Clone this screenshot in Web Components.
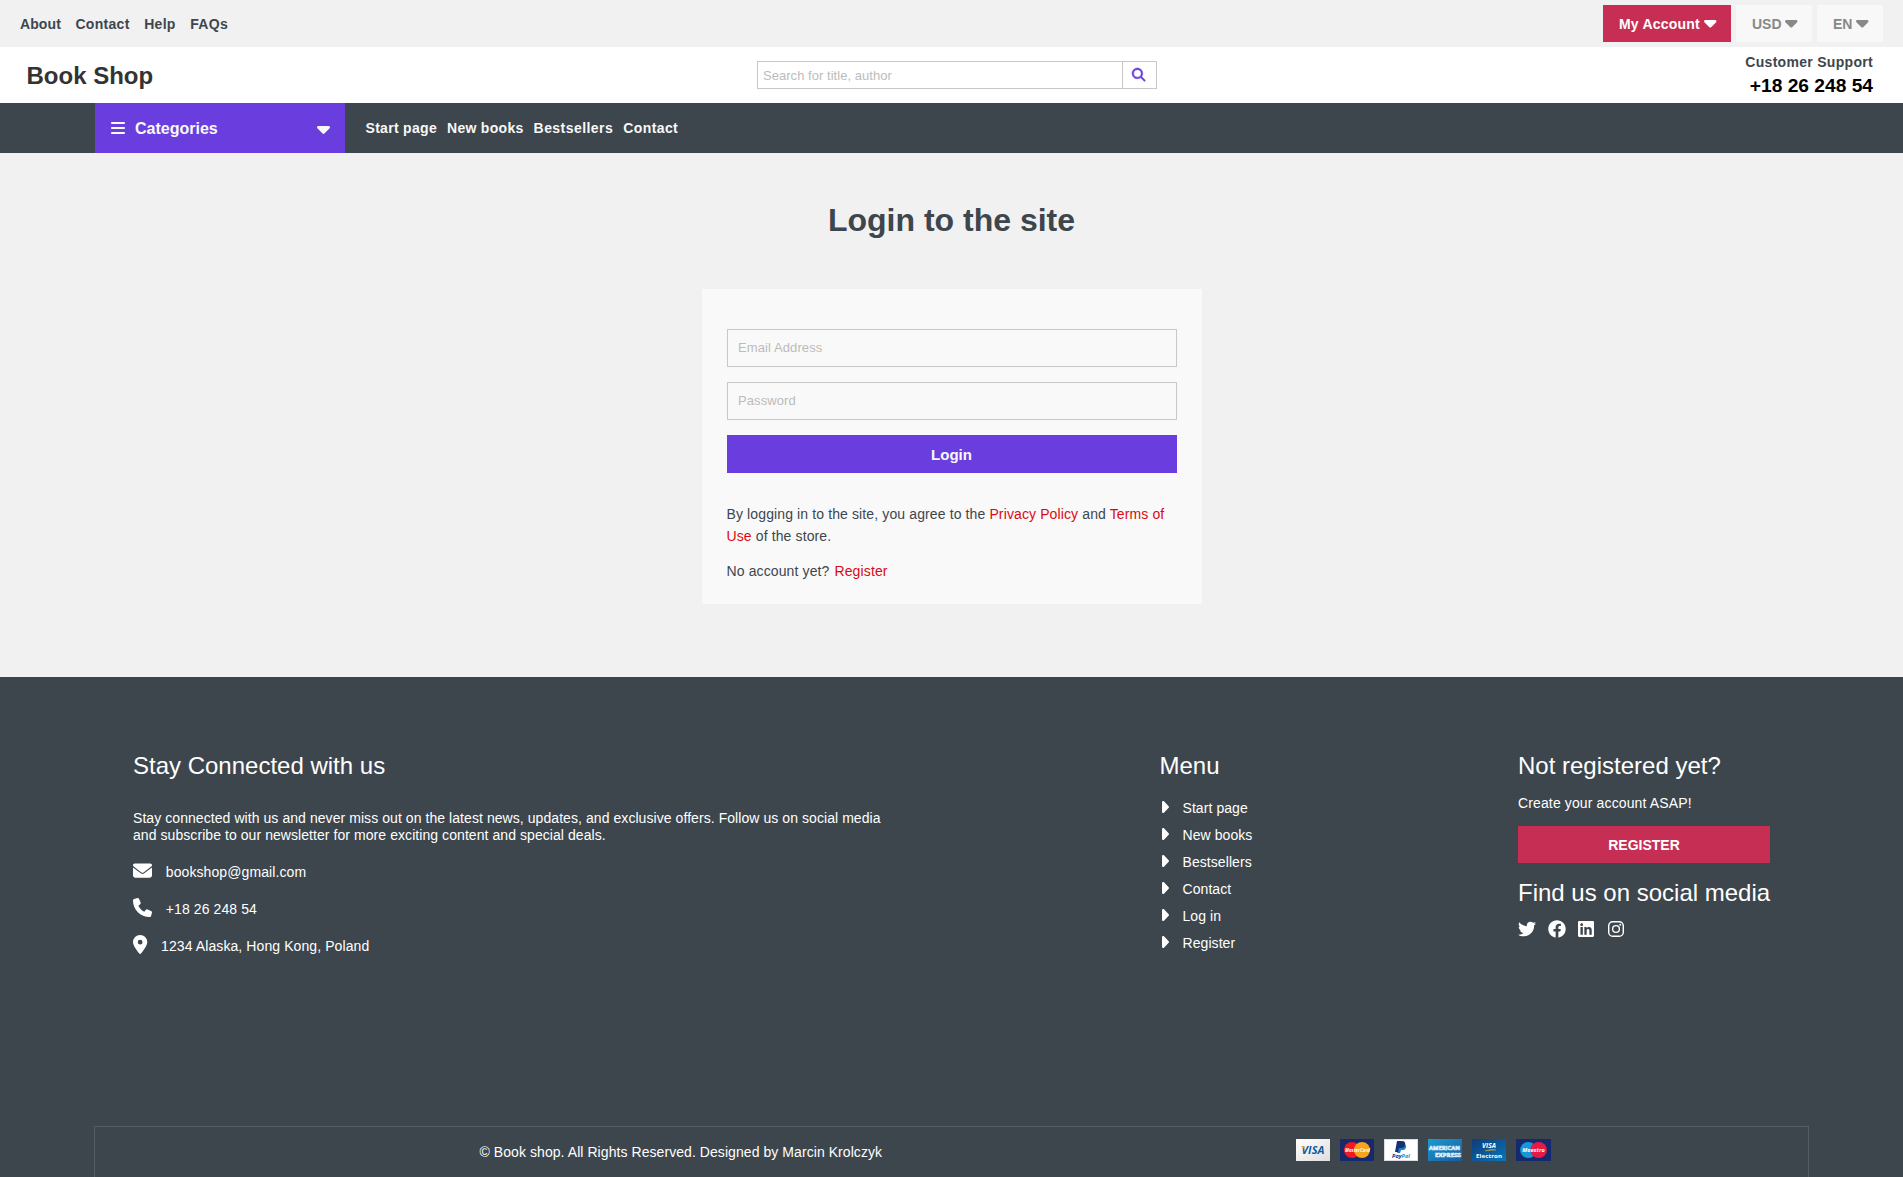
<!DOCTYPE html>
<html lang="en">
<head>
<meta charset="utf-8">
<title>Book Shop</title>
<style>
html,body{margin:0;padding:0}
body{background:#f1f1f1;font-family:"Liberation Sans",Arial,sans-serif;font-size:14px;color:#3d464d;line-height:16px;height:1177px;overflow:hidden}
</style>
</head>
<body>
<book-app></book-app>
<script>
const ICONS={
down:['0 192 320 192','M137.4 374.6c12.5 12.5 32.8 12.5 45.3 0l128-128c9.2-9.2 11.9-22.9 6.9-34.9s-16.6-19.8-29.6-19.8L32 192c-12.9 0-24.6 7.8-29.6 19.8s-2.2 25.7 6.9 34.9l128 128z'],
right:['64 96 192 320','M246.6 278.6c12.5-12.5 12.5-32.8 0-45.3l-128-128c-9.2-9.2-22.9-11.9-34.9-6.9s-19.8 16.6-19.8 29.6l0 256c0 12.9 7.8 24.6 19.8 29.6s25.7 2.2 34.9-6.9l128-128z'],
search:['0 0 512 512','M416 208c0 45.9-14.9 88.3-40 122.7L502.6 457.4c12.5 12.5 12.5 32.8 0 45.3s-32.8 12.5-45.3 0L330.7 376c-34.4 25.2-76.8 40-122.7 40C93.1 416 0 322.9 0 208S93.1 0 208 0S416 93.1 416 208zM208 352a144 144 0 1 0 0-288 144 144 0 1 0 0 288z'],
bars:['0 64 448 384','M0 96C0 78.3 14.3 64 32 64H416c17.7 0 32 14.3 32 32s-14.3 32-32 32H32C14.3 128 0 113.7 0 96zM0 256c0-17.7 14.3-32 32-32H416c17.7 0 32 14.3 32 32s-14.3 32-32 32H32c-17.7 0-32-14.3-32-32zM448 416c0 17.7-14.3 32-32 32H32c-17.7 0-32-14.3-32-32s14.3-32 32-32H416c17.7 0 32 14.3 32 32z'],
mail:['0 0 512 512','M48 64C21.5 64 0 85.5 0 112c0 15.1 7.1 29.3 19.2 38.4L236.8 313.6c11.4 8.5 27 8.5 38.4 0L492.8 150.4c12.1-9.1 19.2-23.3 19.2-38.4c0-26.5-21.5-48-48-48H48zM0 176V384c0 35.3 28.7 64 64 64H448c35.3 0 64-28.7 64-64V176L294.4 339.2c-22.8 17.1-54 17.1-76.8 0L0 176z'],
phone:['0 0 512 512','M164.9 24.6c-7.7-18.6-28-28.5-47.4-23.2l-88 24C12.1 30.2 0 46 0 64C0 311.4 200.6 512 448 512c18 0 33.8-12.1 38.6-29.5l24-88c5.3-19.4-4.6-39.7-23.2-47.4l-96-40c-16.3-6.8-35.2-2.1-46.3 11.6L304.7 368C234.3 334.7 177.3 277.7 144 207.3L193.3 167c13.7-11.2 18.4-30 11.6-46.3l-40-96z'],
pin:['0 0 384 512','M215.7 499.2C267 435 384 279.4 384 192C384 86 298 0 192 0S0 86 0 192c0 87.4 117 243 168.3 307.2c12.3 15.3 35.1 15.3 47.4 0zM192 128a64 64 0 1 1 0 128 64 64 0 1 1 0-128z'],
twitter:['0 0 512 512','M459.37 151.716c.325 4.548.325 9.097.325 13.645 0 138.72-105.583 298.558-298.558 298.558-59.452 0-114.68-17.219-161.137-47.106 8.447.974 16.568 1.299 25.34 1.299 49.055 0 94.213-16.568 130.274-44.832-46.132-.975-84.792-31.188-98.112-72.772 6.498.974 12.995 1.624 19.818 1.624 9.421 0 18.843-1.3 27.614-3.573-48.081-9.747-84.143-51.98-84.143-102.985v-1.299c13.969 7.797 30.214 12.67 47.431 13.319-28.264-18.843-46.781-51.005-46.781-87.391 0-19.492 5.197-37.36 14.294-52.954 51.655 63.675 129.3 105.258 216.365 109.807-1.624-7.797-2.599-15.918-2.599-24.04 0-57.828 46.782-104.934 104.934-104.934 30.213 0 57.502 12.67 76.67 33.137 23.715-4.548 46.456-13.32 66.599-25.34-7.798 24.366-24.366 44.833-46.132 57.827 21.117-2.273 41.584-8.122 60.426-16.243-14.292 20.791-32.161 39.308-52.628 54.253z'],
facebook:['0 0 512 512','M504 256C504 119 393 8 256 8S8 119 8 256c0 123.78 90.69 226.38 209.25 245V327.69h-63V256h63v-54.64c0-62.15 37-96.48 93.67-96.48 27.14 0 55.52 4.84 55.52 4.84v61h-31.28c-30.8 0-40.41 19.12-40.41 38.73V256h68.78l-11 71.69h-57.78V501C413.31 479.77 504 379.78 504 256z'],
linkedin:['0 32 448 448','M416 32H31.9C14.3 32 0 46.5 0 64.3v383.4C0 465.5 14.3 480 31.9 480H416c17.6 0 32-14.5 32-32.3V64.3c0-17.8-14.4-32.3-32-32.3zM135.4 416H69V202.2h66.5V416zm-33.2-243c-21.3 0-38.5-17.3-38.5-38.5S80.9 96 102.2 96c21.2 0 38.5 17.3 38.5 38.5 0 21.3-17.2 38.5-38.5 38.5zm282.1 243h-66.4V312c0-24.8-.5-56.7-34.5-56.7-34.6 0-39.9 27-39.9 54.9V416h-66.4V202.2h63.7v29.2h.9c8.9-16.8 30.6-34.5 62.9-34.5 67.2 0 79.7 44.3 79.7 101.9V416z'],
instagram:['0 32 448 448','M132 32H316A132 132 0 0 1 448 164V348A132 132 0 0 1 316 480H132A132 132 0 0 1 0 348V164A132 132 0 0 1 132 32ZM136 72A96 96 0 0 0 40 168V344A96 96 0 0 0 136 440H312A96 96 0 0 0 408 344V168A96 96 0 0 0 312 72ZM224 141A115 115 0 1 1 224 371A115 115 0 1 1 224 141ZM224 181A75 75 0 1 0 224 331A75 75 0 1 0 224 181ZM343.500 109.500A27 27 0 1 1 343.500 163.500A27 27 0 1 1 343.500 109.500Z']
};
function define(name,html){
  const t=document.createElement('template');t.innerHTML=html;
  customElements.define(name,class extends HTMLElement{
    constructor(){super();this.attachShadow({mode:'open'}).appendChild(t.content.cloneNode(true));}
  });
}
customElements.define('fa-icon',class extends HTMLElement{
  connectedCallback(){
    if(this.shadowRoot)return;
    const [vb,d]=ICONS[this.getAttribute('name')],w=this.getAttribute('w'),h=this.getAttribute('h'),s=this.getAttribute('stroke')||0;
    this.attachShadow({mode:'open'}).innerHTML=`<style>:host{display:block;flex:none;width:${w}px;height:${h}px}svg{display:block;overflow:visible}</style><svg width="${w}" height="${h}" viewBox="${vb}" preserveAspectRatio="none" fill="currentColor" stroke="currentColor" stroke-width="${s}"><path d="${d}"/></svg>`;
  }
});
define('top-bar',`<style>
:host{display:flex;justify-content:space-between;align-items:center;height:47px;padding:0 20px;background:#f1f1f1;font-weight:700;box-sizing:border-box}
nav,div{display:flex}nav{gap:14.5px;padding-top:1px;letter-spacing:.3px}nav a:first-child{letter-spacing:.1px}div{gap:5px}
span{display:flex;align-items:center;justify-content:space-between;height:37px;box-sizing:border-box;padding:1px 15px 0 16px;background:#f8f8f8;color:#888}
.a{width:128px;background:#c62e54;color:#fff;letter-spacing:.2px}.u{width:76px}.e{width:66px}
</style><nav><a>About</a><a>Contact</a><a>Help</a><a>FAQs</a></nav>
<div><span class="a">My Account<fa-icon name="down" w="12.5" h="7.5"></fa-icon></span><span class="u">USD<fa-icon name="down" w="12.500" h="7.5"></fa-icon></span><span class="e">EN<fa-icon name="down" w="12.5" h="7.5"></fa-icon></span></div>`);
define('search-box',`<style>
:host{display:flex;width:400px;height:28px;box-sizing:border-box;border:1px solid #c8c8c8;font-size:13px}
p{margin:0;flex:1;padding:6px 5px 0 5.5px;color:#bcbcbc;line-height:15px;letter-spacing:.04px}
b{width:34px;border-left:1px solid #c8c8c8;color:#6a3ede;display:flex;justify-content:center;align-items:center;box-sizing:border-box}
</style><p>Search for title, author</p><b><fa-icon name="search" w="13.3" h="13.3" stroke="18"></fa-icon></b>`);
define('shop-header',`<style>
:host{display:grid;grid-template-columns:1fr 400px 1fr;align-items:center;height:56px;background:#fff;padding:0 30px 0 26px;box-sizing:border-box}
h1{margin:0;font-size:24px;line-height:28px;color:#333;padding:2px 0 0 .5px}
search-box{position:relative;left:7px}
div{text-align:right;font-weight:700;letter-spacing:.3px}
strong{display:block;font-size:19.2px;line-height:20px;color:#000;margin-top:6px;letter-spacing:0}
</style><h1>Book Shop</h1><search-box></search-box><div>Customer Support<strong>+18 26 248 54</strong></div>`);
define('main-nav',`<style>
:host{display:flex;align-items:center;height:50px;background:#3d464d;padding-left:95px;color:#f8f8f8;font-weight:700}
.c{display:flex;align-items:center;width:250px;height:50px;background:#6a3ede;box-sizing:border-box;padding:0 15px 0 16px;font-size:16px}
.c span{flex:1;padding:1px 0 0 10px}.c fa-icon+span+fa-icon{margin-top:3px}
nav{display:flex;gap:10px;padding-left:20.5px;letter-spacing:.3px}
nav a:nth-child(3){letter-spacing:.45px}nav a:nth-child(4){letter-spacing:.4px}
</style><div class="c"><fa-icon name="bars" w="14" h="12"></fa-icon><span>Categories</span><fa-icon name="down" w="13" h="8"></fa-icon></div>
<nav><a>Start page</a><a>New books</a><a>Bestsellers</a><a>Contact</a></nav>`);
define('text-field',`<style>
:host{display:block;height:38px;border:1px solid #c8c8c8;box-sizing:border-box;padding:10px 10px 10px 10.5px;font-size:13px;color:#bcbcbc;line-height:16px;margin-bottom:15px;letter-spacing:.1px}
</style><slot></slot>`);
define('login-card',`<style>
:host{display:block;width:500px;height:315px;box-sizing:border-box;padding:40px 25px 0;background:#f9f9f9;margin:0 auto;line-height:22px;letter-spacing:.12px}
button{display:block;width:100%;height:38px;border:0;padding:1px 0 0;background:#6a3ede;color:#f8f8f8;font:700 15px "Liberation Sans",sans-serif}
p{margin:30px 0 0}p+p{margin-top:13px}a{color:#d90a12}
</style><text-field>Email Address</text-field><text-field>Password</text-field><button>Login</button>
<p>By logging in to the site, you agree to the <a>Privacy Policy</a> and <a>Terms of Use</a> of the store.</p><p>No account yet?<a style="margin-left:5px">Register</a></p>`);
define('login-page',`<style>
:host{display:block;height:524px;box-sizing:border-box;padding-top:49px}
h2{margin:0 0 51px;font-size:32px;line-height:36px;text-align:center}
</style><h2>Login to the site</h2><login-card></login-card>`);
define('contact-line',`<style>
:host{display:flex;align-items:center;height:19px;margin-bottom:18px;letter-spacing:.09px}span{padding:2px 0 0 14.300px}
</style><slot name="icon"></slot><span><slot></slot></span>`);
define('menu-item',`<style>
:host{display:flex;height:16px;margin-bottom:11px;letter-spacing:.07px}fa-icon{margin:1px 14px 0 2px}
</style><fa-icon name="right" w="7" h="12"></fa-icon><slot></slot>`);
define('pay-cards',`<style>:host{display:flex;gap:10px}svg{display:block;width:34px;height:22px}text{font-family:"Open Sans",sans-serif;font-weight:700}</style>
<svg viewBox="0 0 34 22"><defs><linearGradient id="g" x2="1" y2="1"><stop stop-color="#fff"/><stop offset="1" stop-color="#dedede"/></linearGradient></defs><rect width="34" height="22" fill="url(#g)"/><text x="5.500" y="15" font-size="10.500" font-style="italic" fill="#145a9c" textLength="23" lengthAdjust="spacingAndGlyphs">VISA</text><path d="M5 7.300h3l1.200 3.300z" fill="#f0a030"/></svg>
<svg viewBox="0 0 34 22"><rect width="34" height="22" fill="#16296b"/><circle cx="12" cy="11" r="8" fill="#f01822"/><circle cx="22" cy="11" r="8" fill="#f8a51b"/><text x="5" y="13" font-size="4.600" font-style="italic" fill="#fff" textLength="25" lengthAdjust="spacingAndGlyphs">MasterCard</text></svg>
<svg viewBox="0 0 34 22"><rect x=".5" y=".5" width="33" height="21" fill="#fff" stroke="#ddd"/><path d="M15 5h5c3 0 3 6-1 6h-2l-1 3h-3z" fill="#1b7fc4"/><path d="M13 2h5c5 0 4 7-1 7h-2l-1 4h-3z" fill="#173073"/><text x="8" y="19" font-size="6" font-style="italic" fill="#173073" textLength="18" lengthAdjust="spacingAndGlyphs">Pay<tspan fill="#1b8fd0">Pal</tspan></text></svg>
<svg viewBox="0 0 34 22"><defs><linearGradient id="a" x2="1" y2="1"><stop stop-color="#1d9ad0"/><stop offset="1" stop-color="#155c9f"/></linearGradient></defs><rect width="34" height="22" fill="url(#a)"/><g fill="#1977b5" stroke="#dceefa" stroke-width=".7" font-size="5.500"><text x="1" y="10.500" textLength="31" lengthAdjust="spacingAndGlyphs">AMERICAN</text><text x="7" y="17.500" textLength="26" lengthAdjust="spacingAndGlyphs">EXPRESS</text></g></svg>
<svg viewBox="0 0 34 22"><defs><linearGradient id="v" x2="1" y2="1"><stop stop-color="#103b78"/><stop offset="1" stop-color="#0876b7"/></linearGradient></defs><rect width="34" height="22" fill="url(#v)"/><text x="10" y="9" font-size="6.500" font-style="italic" fill="#fff" textLength="14" lengthAdjust="spacingAndGlyphs">VISA</text><path d="M13 11.800q7-2 11-.8-6-.2-11 .8" fill="#f3a92c" stroke="#f3a92c" stroke-width=".4"/><text x="4" y="18.500" font-size="5.800" fill="#fff" textLength="26" lengthAdjust="spacingAndGlyphs">Electron</text></svg>
<svg viewBox="0 0 34 22" preserveAspectRatio="none" style="width:35px"><rect width="34" height="22" fill="#15296d"/><circle cx="12" cy="11" r="8" fill="#1697d8"/><circle cx="22" cy="11" r="8" fill="#e51b45"/><text x="6" y="13.200" font-size="6" font-style="italic" fill="#fff" textLength="22" lengthAdjust="spacingAndGlyphs">Maestro</text></svg>`);
define('shop-footer',`<style>
:host{display:flex;flex-direction:column;height:500px;background:#3d464d;color:#fff;letter-spacing:.066px}
main{display:flex;height:449px;box-sizing:border-box;padding:75px 0 0 133px}
h3{margin:0;font-size:24px;font-weight:400;line-height:28px;letter-spacing:0;white-space:nowrap}
.l{width:1026.5px}.l p{width:760px;margin:30px 0 17px;line-height:17px}.m{width:358.5px}.l contact-line{margin-left:-.5px}
menu-item:first-of-type{margin-top:20px}
.r{width:252px}.r p{margin:15px 0 15px;letter-spacing:.13px}
button{display:block;border:0;width:252px;height:37px;background:#c62e54;color:#fff;font:700 14px "Liberation Sans",sans-serif;margin-bottom:16px;padding:1px 0 0}
.s{display:flex;align-items:center;margin-top:13px;gap:12px}.s fa-icon:last-child{margin-left:2px}
footer{box-sizing:border-box;width:1715px;height:51px;margin-left:94px;border:1px solid #555c64;border-bottom:0;display:flex;padding:12px 0 0 384.500px}
footer span{width:816.5px;padding-top:5px}
</style><main><section class="l"><h3>Stay Connected with us</h3><p>Stay connected with us and never miss out on the latest news, updates, and exclusive offers. Follow us on social media and subscribe to our newsletter for more exciting content and special deals.</p>
<contact-line><fa-icon slot="icon" name="mail" w="19" h="19"></fa-icon>bookshop@gmail.com</contact-line><contact-line><fa-icon slot="icon" name="phone" w="19" h="19"></fa-icon>+18 26 248 54</contact-line><contact-line><fa-icon slot="icon" name="pin" w="14.300" h="19"></fa-icon>1234 Alaska, Hong Kong, Poland</contact-line></section>
<section class="m"><h3>Menu</h3><menu-item>Start page</menu-item><menu-item>New books</menu-item><menu-item>Bestsellers</menu-item><menu-item>Contact</menu-item><menu-item>Log in</menu-item><menu-item>Register</menu-item></section>
<section class="r"><h3>Not registered yet?</h3><p>Create your account ASAP!</p><button>REGISTER</button><h3>Find us on social media</h3><div class="s"><fa-icon name="twitter" w="18" h="18"></fa-icon><fa-icon name="facebook" w="18" h="18"></fa-icon><fa-icon name="linkedin" w="16" h="16"></fa-icon><fa-icon name="instagram" w="16" h="16"></fa-icon></div></section></main>
<footer><span>© Book shop. All Rights Reserved. Designed by Marcin Krolczyk</span><pay-cards></pay-cards></footer>`);
define('book-app',`<style>:host{display:block}</style><top-bar></top-bar><shop-header></shop-header><main-nav></main-nav><login-page></login-page><shop-footer></shop-footer>`);
</script>
</body>
</html>
